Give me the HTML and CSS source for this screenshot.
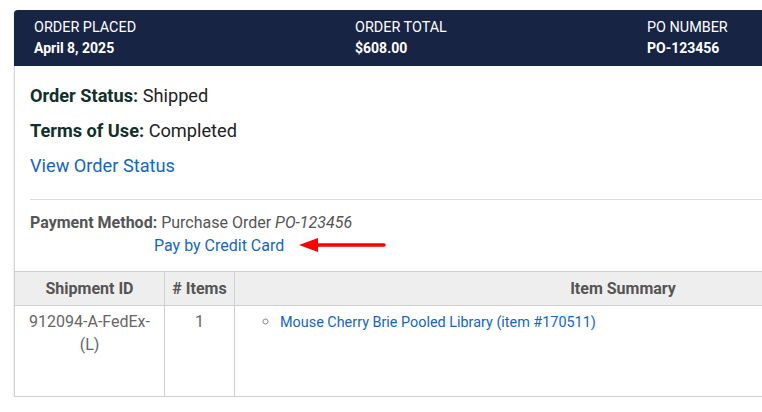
FILE: index.html
```html
<!DOCTYPE html>
<html>
<head>
<meta charset="utf-8">
<link rel="stylesheet" href="styles.css">
</head>
<body>
<div class="card">
  <div class="card-header">
    <div class="hcol">
      <div class="hlabel">ORDER PLACED</div>
      <div class="hvalue">April 8, 2025</div>
    </div>
    <div class="hcol">
      <div class="hlabel">ORDER TOTAL</div>
      <div class="hvalue">$608.00</div>
    </div>
    <div class="hcol">
      <div class="hlabel">PO NUMBER</div>
      <div class="hvalue">PO-123456</div>
    </div>
  </div>
  <div class="card-body">
    <p class="status"><b>Order Status:</b> Shipped</p>
    <p class="status"><b>Terms of Use:</b> Completed</p>
    <p class="status"><a href="#" class="link">View Order Status</a></p>
    <hr class="divider">
    <div class="payment"><b>Payment Method:</b> Purchase Order <i>PO-123456</i></div>
    <div class="pay-row">
      <a href="#" class="link pay-link">Pay by Credit Card</a>
      <svg class="arrow" width="88" height="18" viewBox="0 0 88 18">
        <line x1="14" y1="8" x2="85" y2="8" stroke="#f00" stroke-width="3.5" stroke-linecap="round"/>
        <polygon points="0,8 19,1 19,15" fill="#f00"/>
      </svg>
    </div>
  </div>
  <table class="ship-table">
    <thead>
      <tr>
        <th class="c-id">Shipment ID</th>
        <th class="c-items"># Items</th>
        <th>Item Summary</th>
      </tr>
    </thead>
    <tbody>
      <tr>
        <td class="c-id">912094-A-FedEx-(L)</td>
        <td class="c-items">1</td>
        <td class="summary">
          <ul class="item-list">
            <li><a href="#" class="link item-link">Mouse Cherry Brie Pooled Library (item #170511)</a></li>
          </ul>
        </td>
      </tr>
    </tbody>
  </table>
</div>
</body>
</html>
```

FILE: styles.css
```css
html, body {
  margin: 0;
  padding: 0;
  background: #fff;
  overflow: hidden;
}
body {
  padding: 10px 0 0 14px;
  font-family: Roboto, "Liberation Sans", sans-serif;
}
.card {
  width: 998px;
  box-sizing: border-box;
  border-left: 1px solid #d6d6d6;
  border-top-left-radius: 4px;
  box-shadow: 0 1px 2px rgba(0,0,0,0.18);
  background: #fff;
}
.card-header {
  background: #172444;
  color: #fff;
  height: 56px;
  box-sizing: border-box;
  padding: 8px 0 0 20px;
  display: grid;
  grid-template-columns: 321px 292px 1fr;
  border-top-left-radius: 4px;
  margin-left: -1px;
}
.hlabel {
  font-size: 14.4px;
  line-height: 20px;
}
.hvalue {
  font-size: 14px;
  line-height: 20px;
  font-weight: 700;
}
.card-body {
  padding: 16px 0 0 15px;
}
.status {
  margin: 0 0 8px;
  font-size: 18.2px;
  line-height: 27px;
  color: #222;
}
.status b {
  color: #12302a;
}
.link {
  color: #1565c0;
  text-decoration: none;
}
.divider {
  border: 0;
  border-top: 1px solid #ddd;
  margin: 20px 0 11px;
}
.payment {
  font-size: 16px;
  line-height: 23px;
  color: #555;
}
.pay-row {
  display: flex;
  align-items: center;
  margin: 0 0 13px 124px;
  font-size: 16px;
  line-height: 24px;
}
.arrow {
  margin-left: 15px;
  display: block;
}
.ship-table {
  width: calc(100% + 1px);
  margin-left: -1px;
  border-collapse: collapse;
  font-size: 16px;
}
.ship-table th, .ship-table td {
  border: 1px solid #cfcfcf;
}
.ship-table th {
  background: #eeeeee;
  color: #555;
  font-weight: 700;
  height: 33px;
  padding: 0 6px;
  text-align: center;
}
.ship-table td {
  height: 91px;
  vertical-align: top;
  color: #666;
  line-height: 23px;
  padding: 4px 6px 5px;
  text-align: center;
  box-sizing: border-box;
}
.c-id { width: 150px; box-sizing: border-box; }
.c-items { width: 70px; box-sizing: border-box; }
.ship-table td.summary {
  text-align: left;
}
.item-list {
  margin: 0;
  padding-left: 39px;
  list-style: circle;
}
.item-list li::marker {
  color: #888;
}
.item-link {
  font-size: 14.4px;
}
```
